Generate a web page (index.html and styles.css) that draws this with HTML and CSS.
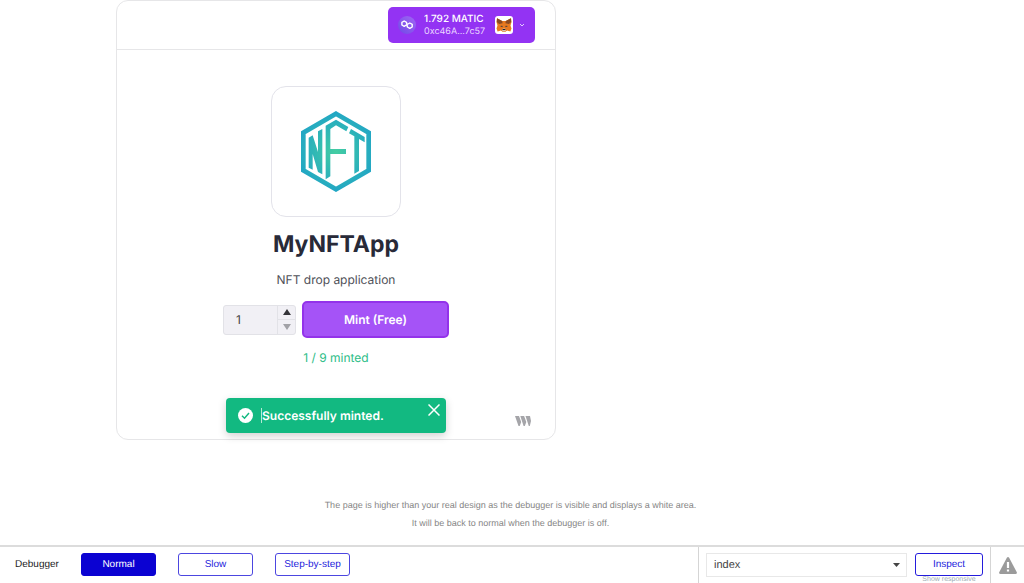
FILE: index.html
```
<!DOCTYPE html>
<html lang="en">
<head>
<meta charset="utf-8">
<meta name="viewport" content="width=device-width, initial-scale=1">
<title>MyNFTApp</title>
<link rel="stylesheet" href="styles.css">
</head>
<body>
<main class="page">
  <section class="card">
    <header class="card-header">
      <button class="wallet" type="button">
        <svg class="wallet-chain" viewBox="0 0 18 18" aria-hidden="true">
          <defs><linearGradient id="chain" x1="0" y1="1" x2="1" y2="0"><stop offset="0" stop-color="#7049e6"/><stop offset="1" stop-color="#a166f4"/></linearGradient></defs>
          <circle cx="9" cy="9" r="9" fill="url(#chain)"/>
          <path d="M8.200 9 6.200 10.300 3.900 9V6.300L6.200 5l2.300 1.300.9 4.700 2.400 1.400 2.400-1.400V8.300L11.800 7 8.200 9" fill="none" stroke="#fff" stroke-width="1.400" stroke-linejoin="round"/>
        </svg>
        <span class="wallet-text">
          <span class="wallet-balance">1.792 MATIC</span>
          <span class="wallet-address">0xc46A...7c57</span>
        </span>
        <svg class="wallet-fox" viewBox="0 0 18 18" aria-hidden="true">
          <rect width="18" height="18" rx="3" fill="#fff"/>
          <path d="M2 2.200 7.200 5h3.600L16 2.200l.5 4-1 3.300 1 2.900-1.100 3.100-3.300-.9-2 1.400H7.900l-2-1.400-3.300.9-1.100-3.100 1-2.900-1-3.300z" fill="#e8791f"/>
          <path d="M2 2.200 7.200 5l.4 2.300-3.500.7-2.300-2zM16 2.200 10.800 5l-.4 2.300 3.500.7 2.300-2z" fill="#8a4a22"/>
          <path d="m5 10 2.300-.3.300 1.500zM13 10l-2.300-.3-.3 1.500z" fill="#293449"/>
          <path d="m7.400 13 .7-.6h1.800l.7.600.2 1.500-.8.900H8l-.8-.9z" fill="#d7c1b3"/>
          <path d="M7.700 13h2.600l.2 1.100h-3z" fill="#2a251f"/>
        </svg>
        <svg class="wallet-caret" viewBox="0 0 6 4" aria-hidden="true"><path d="m1 1 2 2 2-2" fill="none" stroke="#e2c9ff"/></svg>
      </button>
    </header>
    <div class="card-body">
      <div class="artwork">
        <svg class="artwork-logo" viewBox="108 93 210 243" role="img" aria-label="NFT">
          <defs><radialGradient id="nft" gradientUnits="userSpaceOnUse" cx="213" cy="215" r="115"><stop offset="0" stop-color="#44cda2"/><stop offset="1" stop-color="#22a7c4"/></radialGradient></defs>
          <path d="m213 101 98 57v113l-98 57-98-57V158z" fill="none" stroke="url(#nft)" stroke-width="14"/>
          <g fill="url(#nft)">
            <path d="m131 173 12-7 16 50v-62l13-7v136l-13-7-16-54v47l-12-6z"/>
            <path d="m182 137 31-18 37 22-6 13-31-18-17 11v60h47v15h-47v67l-14 9z"/>
            <path d="m258 147 41 24v16l-17-10v96l-14 8V169l-16-9z"/>
          </g>
        </svg>
      </div>
      <h1 class="title">MyNFTApp</h1>
      <p class="description">NFT drop application</p>
      <form class="mint-form">
        <div class="quantity">
          <input class="quantity-input" type="text" inputmode="numeric" value="1" aria-label="Quantity">
          <div class="quantity-steps">
            <button class="step" type="button" aria-label="Increase"><svg class="step-icon" viewBox="0 0 8 6"><path d="M0 6 4 0l4 6z" fill="#343438"/></svg></button>
            <button class="step" type="button" aria-label="Decrease" disabled><svg class="step-icon" viewBox="0 0 8 6"><path d="m0 0 4 6 4-6z" fill="#a2a2a7"/></svg></button>
          </div>
        </div>
        <button class="mint" type="button">Mint (Free)</button>
      </form>
      <p class="supply">1 / 9 minted</p>
    </div>
    <a class="brand" href="#" aria-label="thirdweb">
      <svg class="brand-icon" viewBox="0 0 16 10"><path d="M0 0h4l2.200 6L4.700 10H3.500zM5.300 0h3.800l2.200 6L9.800 10H8.600zM10.500 0H15l1 5-1.200 5h-1z" fill="#a5a5a9"/></svg>
    </a>
    <div class="toast" role="status">
      <svg class="toast-check" viewBox="0 0 15 15" aria-hidden="true"><circle cx="7.500" cy="7.500" r="7.500" fill="#fff"/><path d="m4 7.800 2.500 2.400L11 5" fill="none" stroke="#12b981" stroke-width="1.500"/></svg>
      <span class="toast-text">Successfully minted.</span>
      <button class="toast-close" type="button" aria-label="Close"><svg class="toast-x" viewBox="0 0 12 12"><path d="m.5.5 11 11m0-11-11 11" stroke="#fff" stroke-width="1.500"/></svg></button>
    </div>
  </section>
  <div class="notice">
    <p class="notice-line">The page is higher than your real design as the debugger is visible and displays a white area.</p>
    <p class="notice-line">It will be back to normal when the debugger is off.</p>
  </div>
</main>
<footer class="debugger">
  <div class="speeds">
    <span class="debugger-label">Debugger</span>
    <button class="tool tool-active" type="button">Normal</button>
    <button class="tool" type="button">Slow</button>
    <button class="tool" type="button">Step-by-step</button>
  </div>
  <div class="inspect">
    <div class="select-wrap">
      <select class="page-select" aria-label="Page"><option>index</option></select>
      <svg class="select-caret" viewBox="0 0 7 4" aria-hidden="true"><path d="M0 0h7L3.500 4z" fill="#444"/></svg>
    </div>
    <div class="inspect-actions">
      <button class="tool tool-inspect" type="button">Inspect</button>
      <a class="responsive" href="#">Show responsive</a>
    </div>
  </div>
  <button class="issues" type="button" aria-label="Issues">
    <svg class="issues-icon" viewBox="0 0 18 17"><path d="M8 .6q1-1.200 2 0l7.800 14.600q.4 1.800-1.300 1.800h-15Q-.2 17 .2 15.200z" fill="#9b9b9b"/><path d="M9 5v6M9 12.500v2" stroke="#fff" stroke-width="2.200"/></svg>
  </button>
</footer>
</body>
</html>
```

FILE: styles.css
```
* { box-sizing: border-box; }

body {
  margin: 0;
  min-height: 100vh;
  display: flex;
  flex-direction: column;
  background: #fff;
  color: #222;
  font-family: "Liberation Sans", Arial, sans-serif;
  text-rendering: geometricPrecision;
  overflow-x: hidden;
}

button, input, select { font: inherit; text-rendering: inherit; }
button { cursor: pointer; padding: 0; border: 0; background: none; }
svg { display: block; }
p, h1 { margin: 0; }

.page { flex: 1; display: flex; flex-direction: column; }

.card {
  position: relative;
  width: 440px;
  max-width: 100%;
  margin-left: 116px;
  padding-bottom: 13px;
  display: flex;
  flex-direction: column;
  border: 1px solid #e6e6e8;
  border-radius: 12px;
  font-family: Inter, sans-serif;
}
.card-header {
  display: flex;
  justify-content: flex-end;
  padding: 6px 20px;
  border-bottom: 1px solid #e6e6e8;
}
.wallet {
  width: 147px;
  height: 36px;
  display: flex;
  align-items: center;
  padding: 0 10px;
  border-radius: 5px;
  background: #9333f3;
  color: #fff;
  text-align: left;
}
.wallet-chain { width: 18px; height: 18px; margin-right: 8px; }
.wallet-text { flex: 1; display: flex; flex-direction: column; white-space: nowrap; }
.wallet-balance { font-size: 10px; line-height: 13px; font-weight: 500; }
.wallet-address { font-size: 9px; line-height: 12px; color: #ead6ff; }
.wallet-fox { width: 18px; height: 18px; margin-right: 6px; }
.wallet-caret { width: 6px; height: 4px; }

.card-body {
  display: flex;
  flex-direction: column;
  align-items: center;
  padding-top: 36px;
}
.artwork {
  width: 130px;
  height: 131px;
  display: grid;
  place-items: center;
  border: 1px solid #e3e3ea;
  border-radius: 15px;
}
.artwork-logo { width: 70px; height: 81px; }
.title { margin-top: 11px; font-size: 23px; line-height: 32px; font-weight: 700; color: #282a38; }
.description { margin-top: 12px; font-size: 12px; line-height: 16px; color: #4f5158; }
.mint-form { display: flex; align-items: center; gap: 6px; margin-top: 13px; }
.quantity {
  width: 73px;
  height: 30px;
  display: flex;
  border: 1px solid #e2e2e7;
  border-radius: 3px;
  background: #f1f0f5;
}
.quantity-input {
  flex: 1;
  min-width: 0;
  padding: 0 12px;
  border: 0;
  background: none;
  color: #444;
  font-size: 12px;
}
.quantity-steps { width: 18px; display: flex; flex-direction: column; border-left: 1px solid #e2e2e7; }
.step { flex: 1; display: grid; place-items: center; }
.step + .step { border-top: 1px solid #e2e2e7; }
.step-icon { width: 8px; height: 6px; }
.mint {
  width: 147px;
  height: 37px;
  border: 2px solid #9333ea;
  border-radius: 5px;
  background: #a553f7;
  color: #fff;
  font-size: 12px;
  font-weight: 600;
}
.supply { margin-top: 12px; font-size: 12px; line-height: 16px; color: #2dbd87; }
.brand { align-self: flex-end; margin: 50px 24px 0 0; }
.brand-icon { width: 16px; height: 10px; }

.toast {
  position: absolute;
  left: 50%;
  bottom: 6px;
  width: 220px;
  height: 35px;
  margin-left: -110px;
  display: flex;
  align-items: center;
  padding: 0 6px 0 12px;
  border-radius: 4px;
  background: #12b981;
  color: #fff;
  box-shadow: 0 3px 8px #0000002e;
}
.toast-check { width: 15px; height: 15px; margin-right: 8px; }
.toast-text { flex: 1; border-left: 1px solid #b5e8d5; font-size: 12px; line-height: 15px; font-weight: 600; }
.toast-close { align-self: flex-start; padding-top: 6px; }
.toast-x { width: 12px; height: 12px; }

.notice { margin: auto 0 13px; padding-right: 3px; text-align: center; color: #868686; font-size: 9px; line-height: 18px; }

.debugger {
  height: 38px;
  display: flex;
  border-top: 2px solid #dcdcdc;
  overflow: hidden;
  font-size: 11px;
}
.speeds { flex: 1; display: flex; align-items: flex-start; padding: 6px 0 0 15px; }
.debugger-label { width: 66px; font-size: 10px; line-height: 24px; }
.tool {
  width: 75px;
  height: 23px;
  margin-right: 22px;
  border: 1px solid #4c46e0;
  border-radius: 3px;
  background: #fff;
  color: #241cdc;
  font-size: 10px;
  white-space: nowrap;
}
.tool-active { border-color: #0b02d2; background: #0b02d2; color: #fff; }
.inspect { width: 292px; display: flex; gap: 8px; padding: 6px 7px 0; border-left: 1px solid #d5d5d5; }
.select-wrap { flex: 1; height: 24px; display: grid; align-items: center; }
.page-select {
  grid-area: 1 / 1;
  width: 100%;
  height: 24px;
  padding: 0 7px;
  appearance: none;
  border: 1px solid #e8e8e8;
  border-radius: 0;
  background: #fff;
  color: #444;
}
.select-caret { grid-area: 1 / 1; justify-self: end; width: 7px; height: 4px; margin-right: 7px; pointer-events: none; }
.inspect-actions { width: 68px; text-align: center; }
.tool-inspect { display: block; width: 68px; margin: 0; border-color: #241cdc; }
.responsive { display: block; color: #a0adb5; font-size: 7px; line-height: 8px; text-decoration: none; white-space: nowrap; }
.issues { width: 34px; display: grid; place-items: center; border-left: 1px solid #d5d5d5; }
.issues-icon { width: 18px; height: 17px; }
```
